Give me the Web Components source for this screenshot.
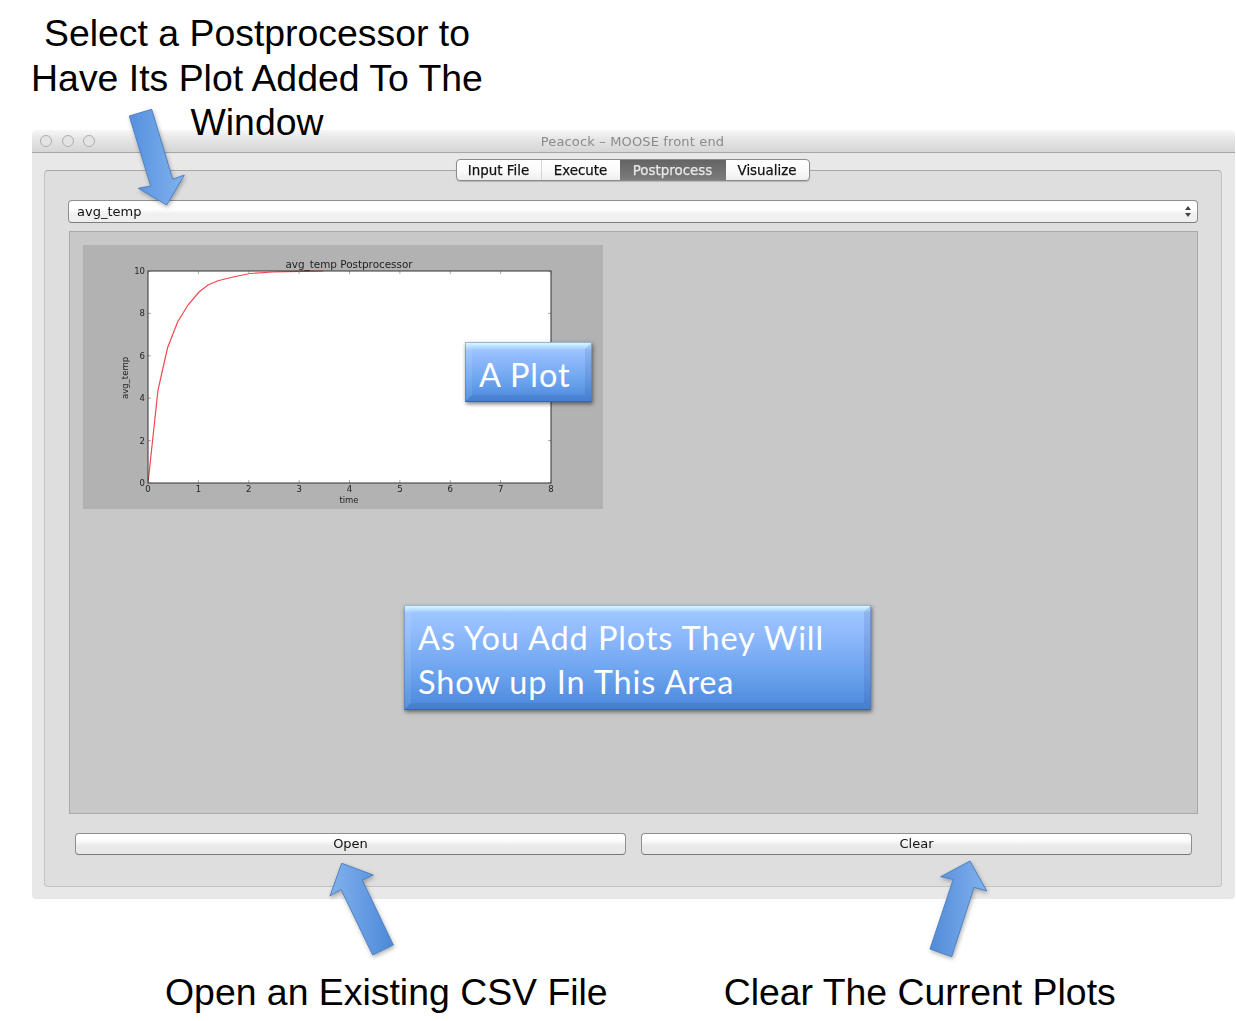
<!DOCTYPE html>
<html>
<head>
<meta charset="utf-8">
<title>Peacock</title>
<style>
  html, body { margin: 0; padding: 0; background: #fff; }
</style>
</head>
<body>
<guide-page></guide-page>
<script>
class MacWindow extends HTMLElement {
  constructor() {
    super();
    this.shadowDOM = this.attachShadow({ mode: "open" });
  }
  connectedCallback() {
    this.shadowDOM.innerHTML = `
      <style>
        :host { display: block; background: #e8e8e8; border-radius: 5px 5px 4px 4px; filter: blur(0.35px); }
        .bar {
          height: 22px;
          display: flex;
          align-items: center;
          position: relative;
          justify-content: center;
          box-sizing: content-box;
          padding-right: 2px;
          border-bottom: 1px solid #a6a6a6;
          border-radius: 5px 5px 0 0;
          background: linear-gradient(#f7f7f7, #e6e6e6 40%, #d6d6d6);
          color: #8a8a8a;
          font: 13px "DejaVu Sans", sans-serif;
          letter-spacing: 0.15px;
        }
        .lights { position: absolute; left: 8px; top: 5px; display: flex; gap: 9.5px; }
        .lights i {
          width: 12px; height: 12px; box-sizing: border-box;
          border-radius: 50%;
          border: 1px solid #adadad;
          background: #e4e4e4;
        }
      </style>
      <div class="bar">
        <div class="lights"><i></i><i></i><i></i></div>
        <span>${this.getAttribute("heading")}</span>
      </div>
      <slot></slot>`;
  }
}
customElements.define("mac-window", MacWindow);

class TabBar extends HTMLElement {
  constructor() {
    super();
    this.shadowDOM = this.attachShadow({ mode: "open" });
  }
  connectedCallback() {
    const active = this.getAttribute("active");
    const tabs = this.getAttribute("tabs").split(",");
    this.shadowDOM.innerHTML = `
      <style>
        :host {
          display: inline-flex;
          height: 22px;
          box-sizing: border-box;
          border: 1px solid #8b8b8b;
          border-radius: 4px;
          overflow: hidden;
          background: linear-gradient(#fff, #fbfbfb 50%, #efefef);
          box-shadow: 0 1px 1px rgba(0,0,0,.18);
          font: 13.4px "DejaVu Sans", sans-serif;
          -webkit-text-stroke: 0.25px;
          color: #111;
        }
        span { display: flex; align-items: center; justify-content: center; }
        .on { background: linear-gradient(#646464, #7c7c7c); color: #e8e8e8; }
        .sep { border-right: 1px solid #d6d6d6; }
      </style>
      ${tabs.map((t, i) => {
        const w = [84, 78, 106, 83][i];
        const cls = (t === active ? "on" : "") + (i === 0 ? " sep" : "");
        return `<span class="${cls}" style="width:${w}px">${t}</span>`;
      }).join("")}`;
  }
}
customElements.define("tab-bar", TabBar);

class MacSelect extends HTMLElement {
  constructor() {
    super();
    this.shadowDOM = this.attachShadow({ mode: "open" });
  }
  connectedCallback() {
    this.shadowDOM.innerHTML = `
      <style>
        :host {
          display: flex;
          align-items: center;
          justify-content: space-between;
          height: 23px;
          box-sizing: border-box;
          padding: 0 5px 0 8px;
          border: 1px solid #8f8f8f;
          border-bottom-color: #7d7d7d;
          border-radius: 4px;
          background: linear-gradient(#fff, #fff 40%, #f0f0f0 60%, #efefef);
          font: 13px "DejaVu Sans", sans-serif;
          color: #111;
        }
        svg { display: block; }
      </style>
      <slot></slot>
      <svg width="8" height="13" viewBox="0 0 8 13"><path d="M4 1 7 5H1ZM1 8h6L4 12Z" fill="#444"/></svg>`;
  }
}
customElements.define("mac-select", MacSelect);

class MacButton extends HTMLElement {
  constructor() {
    super();
    this.shadowDOM = this.attachShadow({ mode: "open" });
  }
  connectedCallback() {
    this.shadowDOM.innerHTML = `
      <style>
        :host {
          display: flex;
          align-items: center;
          justify-content: center;
          height: 22px;
          box-sizing: border-box;
          padding-bottom: 2px;
          border: 1px solid #8f8f8f;
          border-bottom-color: #777;
          border-radius: 4px;
          background: linear-gradient(#fff, #fdfdfd 30%, #e9e9e9 60%, #e8e8e8);
          font: 13px "DejaVu Sans", sans-serif;
          color: #111;
        }
      </style>
      <slot></slot>`;
  }
}
customElements.define("mac-button", MacButton);

class PlotChart extends HTMLElement {
  constructor() {
    super();
    this.shadowDOM = this.attachShadow({ mode: "open" });
  }
  connectedCallback() {
    const left = 65, top = 26, w = 403, h = 212;
    const xs = [0, 1, 2, 3, 4, 5, 6, 7, 8];
    const ys = [0, 2, 4, 6, 8, 10];
    const px = v => left + v * w / 8;
    const py = v => top + h - v * h / 10;
    const curve = "65,238 75,145 84.5,103 94.7,76.7 105,60 116,47 125,40 135,35.7 150,32 167,28.5 190,27 217,26.4 240,26";
    let marks = "";
    xs.forEach(v => {
      marks += `<path d="M${px(v)} ${top}v3M${px(v)} ${top + h}v-3" stroke="#aaa"/>`;
      marks += `<text x="${px(v)}" y="${top + h + 9}" text-anchor="middle">${v}</text>`;
    });
    ys.forEach(v => {
      marks += `<path d="M${left} ${py(v)}h3M${left + w} ${py(v)}h-3" stroke="#aaa"/>`;
      marks += `<text x="${left - 3}" y="${py(v) + 3}" text-anchor="end">${v}</text>`;
    });
    this.shadowDOM.innerHTML = `
      <style>
        :host { display: block; width: 520px; height: 264px; background: #b2b2b2; }
        svg { display: block; }
        text { font: 8.5px "DejaVu Sans", sans-serif; fill: #222; }
        .t { font-size: 10.4px; }
      </style>
      <svg width="520" height="264" viewBox="0 0 520 264">
        <rect x="${left}" y="${top}" width="${w}" height="${h}" fill="#fff"/>
        <polyline points="${curve}" fill="none" stroke="#f2474d" stroke-width="1.2"/>
        ${marks}
        <rect x="${left}" y="${top}" width="${w}" height="${h}" fill="none" stroke="#333"/>
        <text class="t" x="266" y="23" text-anchor="middle">avg_temp Postprocessor</text>
        <text x="266" y="258" text-anchor="middle">time</text>
        <text transform="translate(45 133) rotate(-90)" text-anchor="middle">avg_temp</text>
      </svg>`;
  }
}
customElements.define("plot-chart", PlotChart);

class BlueNote extends HTMLElement {
  constructor() {
    super();
    this.shadowDOM = this.attachShadow({ mode: "open" });
  }
  connectedCallback() {
    this.shadowDOM.innerHTML = `
      <style>
        :host {
          position: absolute;
          box-sizing: border-box;
          border: 7px solid;
          border-color: transparent rgba(30,60,120,.12) rgba(20,50,110,.1) rgba(255,255,255,.08);
          padding: 5px 7px;
          background: linear-gradient(#e2fbff 0, #c8ebff 3px, #9cc5ff 8px, #91bbfc 25%, #6ba3ee 65%, #4a86da 100%) border-box;
          box-shadow: 1px 2px 4px rgba(0,0,0,.5);
          color: #fff;
          font: 32.500px/44px Lato, sans-serif;
          letter-spacing: 0.9px;
          white-space: nowrap;
        }
        :host::before {
          content: "";
          position: absolute;
          inset: -7px;
          border: 1px solid rgba(85,120,175,.5);
          border-bottom-color: #3a66a5;
        }
      </style>
      <slot></slot>`;
  }
}
customElements.define("blue-note", BlueNote);

class BlueArrow extends HTMLElement {
  constructor() {
    super();
    this.shadowDOM = this.attachShadow({ mode: "open" });
  }
  connectedCallback() {
    const id = this.getAttribute("name");
    const a = this.getAttribute("from"), b = this.getAttribute("to");
    this.shadowDOM.innerHTML = `
      <style>
        :host { position: absolute; inset: 0; pointer-events: none; z-index: 2; }
        svg { display: block; overflow: visible; }
        polygon { filter: drop-shadow(1px 2px 2px rgba(0,0,0,.3)); }
      </style>
      <svg width="1236" height="1021" viewBox="0 0 1236 1021">
        <defs><linearGradient id="${id}" x1="0" y1="0" x2="1" y2="0">
          <stop offset="0" stop-color="${a}"/><stop offset="1" stop-color="${b}"/>
        </linearGradient></defs>
        <polygon points="${this.getAttribute("points")}" fill="url(#${id})" stroke="#4d82c4" stroke-width="1"/>
      </svg>`;
  }
}
customElements.define("blue-arrow", BlueArrow);

class CallOut extends HTMLElement {
  constructor() {
    super();
    this.shadowDOM = this.attachShadow({ mode: "open" });
  }
  connectedCallback() {
    this.shadowDOM.innerHTML = `
      <style>
        :host {
          display: block;
          font: 37.400px/44.600px "Liberation Sans", Arial, sans-serif;
          color: #000;
          text-align: center;
          white-space: nowrap;
        }
      </style>
      <slot></slot>`;
  }
}
customElements.define("call-out", CallOut);

class GuidePage extends HTMLElement {
  constructor() {
    super();
    this.shadowDOM = this.attachShadow({ mode: "open" });
  }
  connectedCallback() {
    this.shadowDOM.innerHTML = `
      <style>
        :host {
          display: block;
          position: relative;
          width: 1236px;
          height: 1021px;
          box-sizing: border-box;
          padding: 130px 1px 0 32px;
          overflow: hidden;
        }
        .top { position: absolute; left: 0; top: 11px; width: 514px; z-index: 1; }
        .tabs { display: flex; justify-content: center; padding: 6px 2px 0 0; margin-bottom: -11px; position: relative; z-index: 1; }
        .pane {
          margin: 0 13px 0 12px;
          padding: 29px 23px 31px;
          border: 1px solid #c2c2c2;
          border-top-color: #a8a8a8;
          border-radius: 4px;
          background: #dedede;
        }
        mac-select { margin-bottom: 8px; }
        .area {
          height: 583px;
          margin-left: 1px;
          box-sizing: border-box;
          padding: 13px;
          border: 1px solid #a9a9a9;
          background: #c8c8c8;
        }
        .buttons { display: grid; grid-template-columns: 1fr 1fr; gap: 15px; padding: 19px 6px 0 7px; }
        .win-foot { height: 12px; }
        .captions { display: flex; padding: 71px 0 0 133px; gap: 116px; }
        .plot-note { left: 465px; top: 342px; width: 127px; height: 60px; padding-top: 4px; padding-bottom: 0; }
        .area-note { left: 404px; top: 605px; width: 467px; height: 105px; padding-top: 4px; }
      </style>
      <call-out class="top">Select a Postprocessor to<br>Have Its Plot Added To The<br>Window</call-out>
      <mac-window heading="Peacock – MOOSE front end">
        <div class="tabs"><tab-bar tabs="Input File,Execute,Postprocess,Visualize" active="Postprocess"></tab-bar></div>
        <div class="pane">
          <mac-select>avg_temp</mac-select>
          <div class="area"><plot-chart></plot-chart></div>
          <div class="buttons">
            <mac-button>Open</mac-button>
            <mac-button>Clear</mac-button>
          </div>
        </div>
        <div class="win-foot"></div>
      </mac-window>
      <div class="captions">
        <call-out>Open an Existing CSV File</call-out>
        <call-out>Clear The Current Plots</call-out>
      </div>
      <blue-note class="plot-note">A Plot</blue-note>
      <blue-note class="area-note">As You Add Plots They Will<br>Show up In This Area</blue-note>
      <blue-arrow name="a1" from="#5590de" to="#82b2ee" points="129.300,116 151.700,109.300 172.700,179.300 184.300,175 166.700,205 138.300,188.300 150.700,186"></blue-arrow>
      <blue-arrow name="a2" from="#82b2ee" to="#4c88d8" points="341.700,863.300 373.300,875 362.300,880 393.300,945 372.700,955 341,889.300 330,896"></blue-arrow>
      <blue-arrow name="a3" from="#528bd9" to="#82b2ee" points="970,861 986.700,891 974,887.300 951.700,956.700 930,949 953.300,879.300 940.700,876.700"></blue-arrow>`;
  }
}
customElements.define("guide-page", GuidePage);
</script>
</body>
</html>
